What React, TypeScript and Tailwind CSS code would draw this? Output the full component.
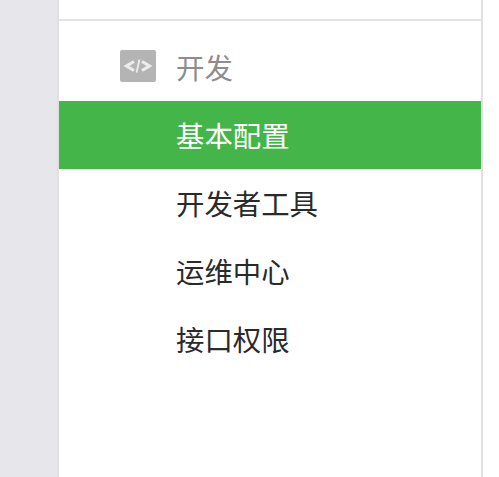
export default function App() {
  const items = ["基本配置", "开发者工具", "运维中心", "接口权限"];
  return (
    <div className="flex h-[477px] w-[499px] overflow-hidden bg-white font-['Liberation_Sans','Noto_Sans_CJK_SC',sans-serif]">
      <div className="h-full w-[57px] bg-[#e7e7eb]" />
      <div className="h-full w-[426px] border-x-2 border-[#e0e0e3] bg-white">
        <div className="mt-[19px] h-[2px] bg-[#e4e4e7]" />
        <div className="mt-[13px] flex h-[67px] items-center pb-[3px] pl-[61px]">
          <div className="flex h-[32px] w-[36px] items-center justify-center rounded-[2px] bg-[#b4b4b4]">
            <svg width="30" height="16" viewBox="0 0 30 16" fill="none" stroke="#ececec" strokeWidth="3.2">
              <path d="M11 3.5 3.5 8 11 12.5" />
              <path d="M19 3.5 26.5 8 19 12.5" />
              <path d="M16.5 1.5 13.5 14.5" strokeWidth="1.8" />
            </svg>
          </div>
          <span className="ml-[20px] pt-[6px] text-[28.4px] leading-[40px] text-[#8d8d8d]">开发</span>
        </div>
        <div className="flex flex-col">
          {items.map((t, i) => (
            <div
              key={t}
              className={
                i === 0
                  ? "flex h-[68px] items-center bg-[#44b549] pl-[117px] pt-[4px] text-[28.4px] text-white"
                  : "flex h-[68px] items-center pl-[117px] pt-[4px] text-[28.4px] text-[#2a2a2a]"
              }
            >
              {t}
            </div>
          ))}
        </div>
      </div>
      <div className="flex-1 bg-white" />
    </div>
  );
}
